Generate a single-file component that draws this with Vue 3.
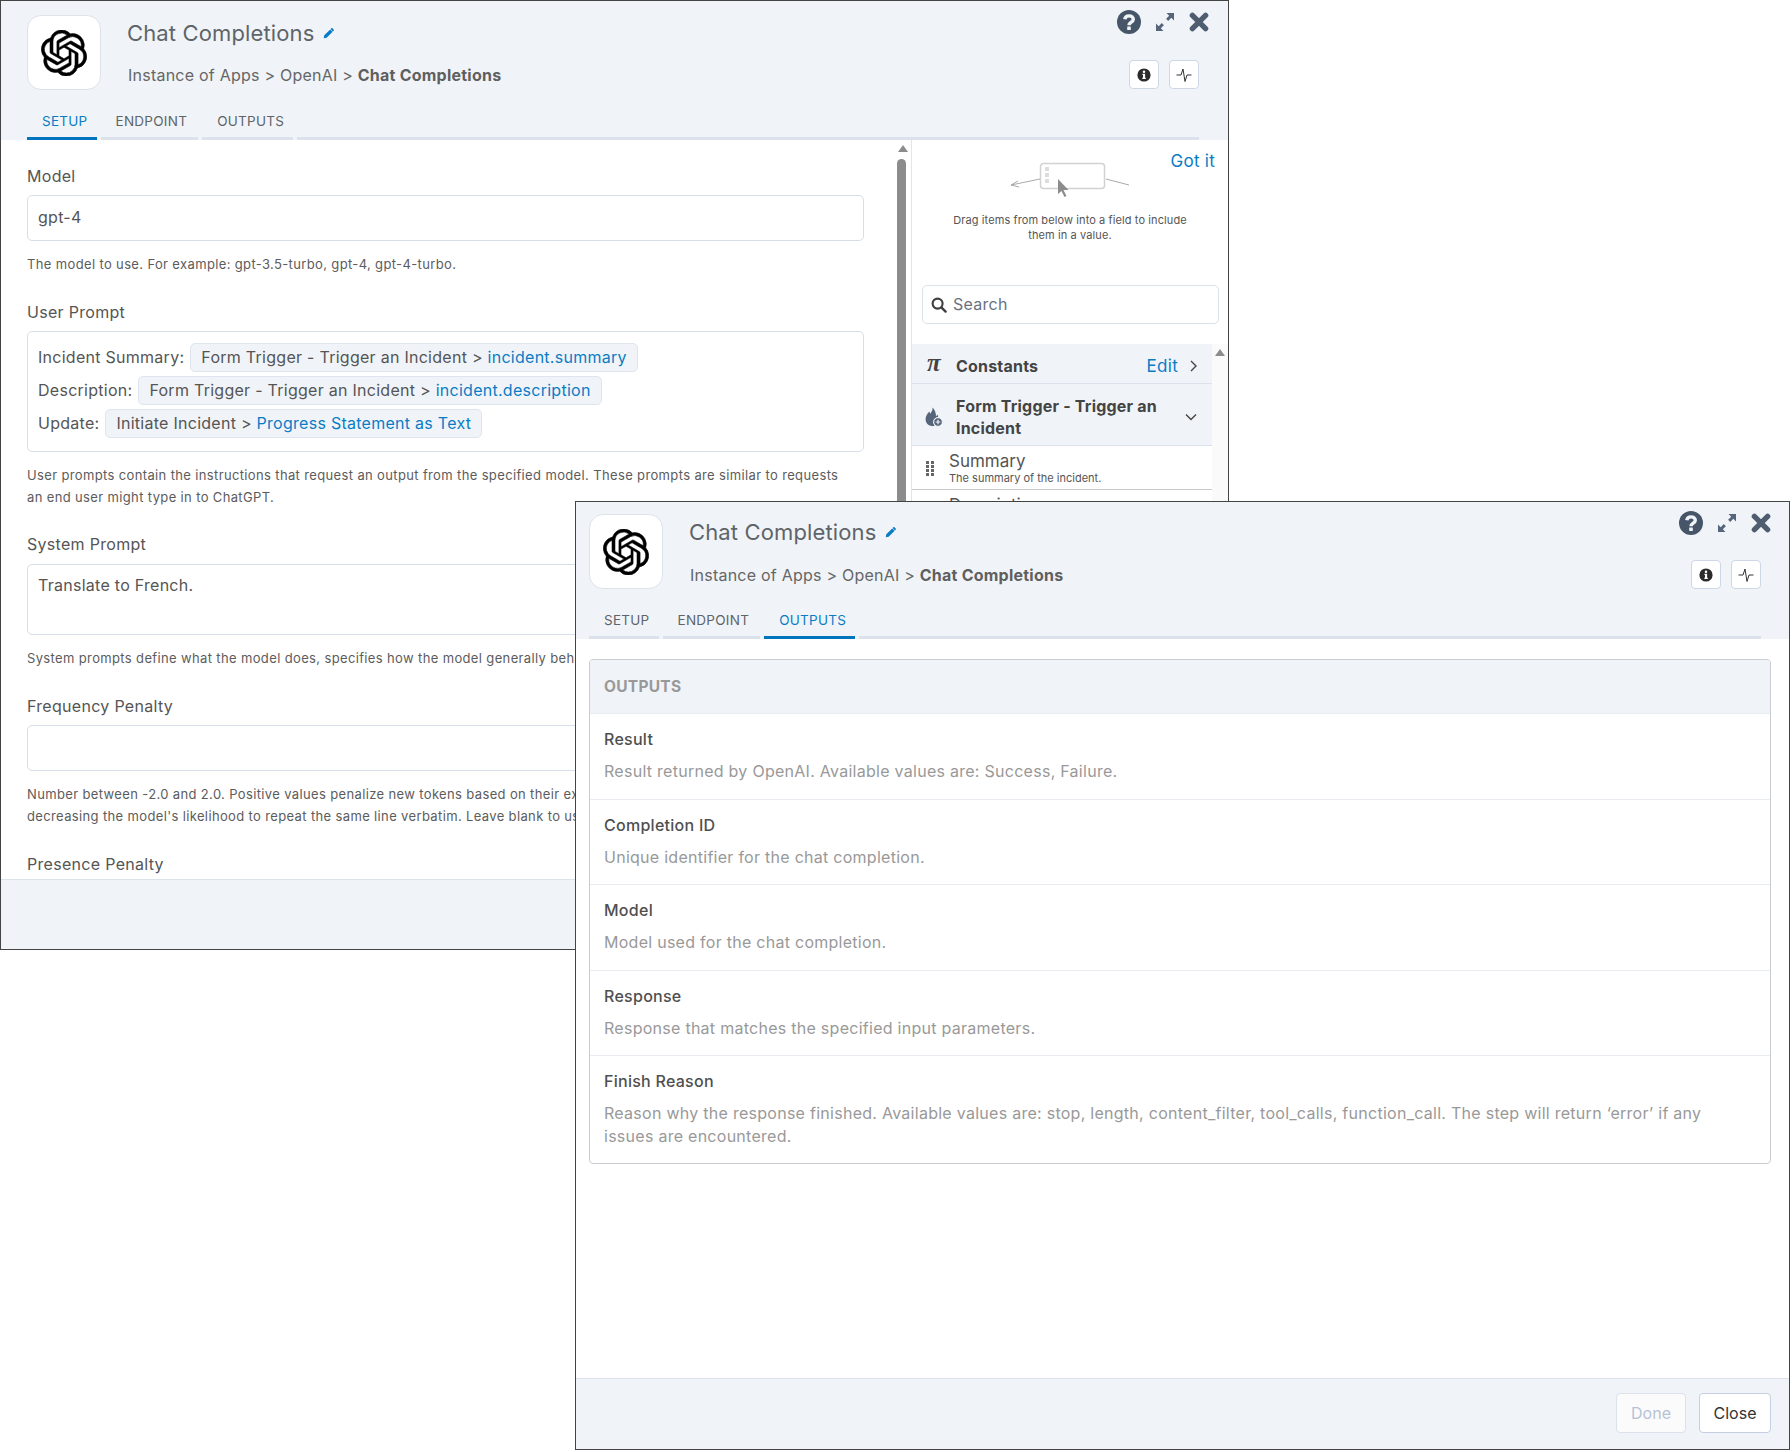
<script setup>
const tabs1 = [
  { name: 'SETUP', active: true },
  { name: 'ENDPOINT' },
  { name: 'OUTPUTS' },
]
const tabs2 = [
  { name: 'SETUP' },
  { name: 'ENDPOINT' },
  { name: 'OUTPUTS', active: true },
]
const outputs = [
  { label: 'Result', text: 'Result returned by OpenAI. Available values are: Success, Failure.' },
  { label: 'Completion ID', text: 'Unique identifier for the chat completion.' },
  { label: 'Model', text: 'Model used for the chat completion.' },
  { label: 'Response', text: 'Response that matches the specified input parameters.' },
  { label: 'Finish Reason', text: 'Reason why the response finished. Available values are: stop, length, content_filter, tool_calls, function_call. The step will return ‘error’ if any issues are encountered.' },
]
const chips = [
  { label: 'Incident Summary:', src: 'Form Trigger - Trigger an Incident >', val: 'incident.summary' },
  { label: 'Description:', src: 'Form Trigger - Trigger an Incident >', val: 'incident.description' },
  { label: 'Update:', src: 'Initiate Incident >', val: 'Progress Statement as Text' },
]
</script>

<template>
  <div class="desk">
    <svg class="defs" width="0" height="0" aria-hidden="true">
      <symbol id="openai" viewBox="0 0 24 24" preserveAspectRatio="none">
        <path fill="#000" stroke="#000" stroke-width=".3" d="M22.2819 9.8211a5.9847 5.9847 0 0 0-.5157-4.9108 6.0462 6.0462 0 0 0-6.5098-2.9A6.0651 6.0651 0 0 0 4.9807 4.1818a5.9847 5.9847 0 0 0-3.9977 2.9 6.0462 6.0462 0 0 0 .7427 7.0966 5.98 5.98 0 0 0 .511 4.9107 6.051 6.051 0 0 0 6.5146 2.9001A5.9847 5.9847 0 0 0 13.2599 24a6.0557 6.0557 0 0 0 5.7718-4.2058 5.9894 5.9894 0 0 0 3.9977-2.9001 6.0557 6.0557 0 0 0-.7475-7.0729zm-9.022 12.6081a4.4755 4.4755 0 0 1-2.8764-1.0408l.1419-.0804 4.7783-2.7582a.7948.7948 0 0 0 .3927-.6813v-6.7369l2.02 1.1686a.071.071 0 0 1 .038.052v5.5826a4.504 4.504 0 0 1-4.4945 4.4944zm-9.6607-4.1254a4.4708 4.4708 0 0 1-.5346-3.0137l.142.0852 4.783 2.7582a.7712.7712 0 0 0 .7806 0l5.8428-3.3685v2.3324a.0804.0804 0 0 1-.0332.0615L9.74 19.9502a4.4992 4.4992 0 0 1-6.1408-1.6464zM2.3408 7.8956a4.485 4.485 0 0 1 2.3655-1.9728V11.6a.7664.7664 0 0 0 .3879.6765l5.8144 3.3543-2.0201 1.1685a.0757.0757 0 0 1-.071 0l-4.8303-2.7865A4.504 4.504 0 0 1 2.3408 7.872zm16.5963 3.8558L13.1038 8.364 15.1192 7.2a.0757.0757 0 0 1 .071 0l4.8303 2.7913a4.4944 4.4944 0 0 1-.6765 8.1042v-5.6772a.79.79 0 0 0-.407-.667zm2.0107-3.0231l-.142-.0852-4.7735-2.7818a.7759.7759 0 0 0-.7854 0L9.409 9.2297V6.8974a.0662.0662 0 0 1 .0284-.0615l4.8303-2.7866a4.4992 4.4992 0 0 1 6.6802 4.66zM8.3065 12.863l-2.02-1.1638a.0804.0804 0 0 1-.038-.0567V6.0742a4.4992 4.4992 0 0 1 7.3757-3.4537l-.142.0805L8.704 5.459a.7948.7948 0 0 0-.3927.6813zm1.0976-2.3654l2.602-1.4998 2.6069 1.4998v2.9994l-2.5974 1.4997-2.6067-1.4997Z"/>
      </symbol>
      <symbol id="pencil" viewBox="0 0 12 12">
        <path fill="#0a7cc4" d="M7.900 1.500 10.500 4.100 4 10.600.8 11.200 1.400 8zM9 .4a1 1 0 0 1 1.400 0l1.200 1.200a1 1 0 0 1 0 1.400l-.7.700-2.600-2.600z"/>
      </symbol>
      <symbol id="help" viewBox="0 0 24 24">
        <circle cx="12" cy="12" r="12" fill="#475569"/>
        <path fill="none" stroke="#f0f4f8" stroke-width="3.400" d="M7.800 9.300c.3-2.300 2-3.400 4.300-3.400 2.400 0 4.200 1.300 4.200 3.300 0 3-4.300 2.800-4.300 6"/>
        <rect x="10.200" y="16.600" width="3.600" height="3.400" rx=".5" fill="#f0f4f8"/>
      </symbol>
      <symbol id="expand" viewBox="0 0 20 20">
        <path fill="#56657a" d="M11.500 1H19v7.500l-2.700-2.700-3.100 3.100-2.100-2.100 3.100-3.100zM8.500 19H1v-7.500l2.700 2.700 3.100-3.100 2.100 2.100-3.100 3.100z"/>
      </symbol>
      <symbol id="close" viewBox="0 0 20 20">
        <path fill="none" stroke="#4f5d70" stroke-width="5.400" stroke-linecap="round" d="M3.400 3.400 16.600 16.600M16.600 3.400 3.400 16.600"/>
      </symbol>
      <symbol id="info" viewBox="0 0 14 14">
        <circle cx="7" cy="7" r="6.600" fill="#2b2b2b"/>
        <circle cx="7" cy="3.700" r="1.250" fill="#fff"/>
        <path fill="#fff" d="M5.400 5.800h2.700v4h.7v1.200H5.300V9.800H6V7H5.400z"/>
      </symbol>
      <symbol id="pulse" viewBox="0 0 16 16">
        <path fill="none" stroke="#333" stroke-width="1" d="M.5 8H5L7 2 9 14.500 11 8h4.500"/>
      </symbol>
      <symbol id="search" viewBox="0 0 16 16">
        <circle cx="6.600" cy="6.600" r="5" fill="none" stroke="#3f3f3f" stroke-width="2.100"/>
        <path stroke="#3f3f3f" stroke-width="2.400" stroke-linecap="round" d="m10.600 10.600 4 4"/>
      </symbol>
    </svg>

    <!-- Back window: Setup tab -->
    <section class="window back">
      <header class="head">
        <div class="head-top">
          <div class="logo"><svg class="logo-mark"><use href="#openai" /></svg></div>
          <div class="titles">
            <div class="title">Chat Completions <svg class="pencil"><use href="#pencil" /></svg></div>
            <div class="crumbs">Instance of Apps &gt; OpenAI &gt; <b>Chat Completions</b></div>
          </div>
          <div class="actions">
            <div class="tools">
              <svg class="i-help"><use href="#help" /></svg>
              <svg class="i-expand"><use href="#expand" /></svg>
              <svg class="i-close"><use href="#close" /></svg>
            </div>
            <div class="mini-btns">
              <button class="mini"><svg class="i-info"><use href="#info" /></svg></button>
              <button class="mini"><svg class="i-pulse"><use href="#pulse" /></svg></button>
            </div>
          </div>
        </div>
        <nav class="tabs">
          <span v-for="t in tabs1" :key="t.name" class="tab" :class="{ on: t.active }">{{ t.name }}</span>
          <span class="tab-rest"></span>
        </nav>
      </header>

      <div class="body">
        <div class="form">
          <div class="field">
            <div class="label">Model</div>
            <div class="control">gpt-4</div>
            <p class="help">The model to use. For example: gpt-3.5-turbo, gpt-4, gpt-4-turbo.</p>
          </div>
          <div class="field user-prompt">
            <div class="label">User Prompt</div>
            <div class="control prompt">
              <div v-for="c in chips" :key="c.label" class="prompt-line">
                <span>{{ c.label }}</span>
                <span class="chip">{{ c.src }} <a>{{ c.val }}</a></span>
              </div>
            </div>
            <p class="help">User prompts contain the instructions that request an output from the specified model. These prompts are similar to requests<br />an end user might type in to ChatGPT.</p>
          </div>
          <div class="field">
            <div class="label">System Prompt</div>
            <div class="control area">Translate to French.</div>
            <p class="help">System prompts define what the model does, specifies how the model generally behaves.</p>
          </div>
          <div class="field">
            <div class="label">Frequency Penalty</div>
            <div class="control"></div>
            <p class="help">Number between -2.0 and 2.0. Positive values penalize new tokens based on their existing frequency in the text so far,<br />decreasing the model's likelihood to repeat the same line verbatim. Leave blank to use the default.</p>
          </div>
          <div class="field">
            <div class="label">Presence Penalty</div>
          </div>
        </div>

        <div class="scroll">
          <span class="arrow"></span>
          <span class="thumb"></span>
        </div>

        <aside class="panel">
          <div class="intro">
            <a class="got">Got it</a>
            <svg class="drag-art" viewBox="0 0 120 40" width="120" height="40">
              <rect x="30.500" y="4.500" width="64" height="25" rx="3" fill="#fff" stroke="#d2d2d2" stroke-width="1.500" />
              <rect x="35" y="8" width="4" height="4" fill="#ddd" />
              <rect x="35" y="14" width="4" height="4" fill="#ddd" />
              <rect x="35" y="20" width="4" height="4" fill="#ddd" />
              <path d="M30 20 1 26M8 22l-7 4 8 2" fill="none" stroke="#aaa" />
              <path d="M96 20l23 6" fill="none" stroke="#aaa" />
              <path d="M48 20v15l3.500-3 3 6 2-1-3-6h5z" fill="#8c8c8c" />
            </svg>
          </div>
          <p class="drag-text">Drag items from below into a field to include<br />them in a value.</p>
          <div class="search">
            <svg class="i-search"><use href="#search" /></svg>
            <span class="search-text">Search</span>
          </div>
          <div class="lists">
            <div class="list">
              <div class="group constants">
                <span class="pi">π</span>
                <b>Constants</b>
                <a class="edit">Edit</a>
                <svg class="chev" viewBox="0 0 10 12" width="10" height="12"><path d="M2 1l5 5-5 5" fill="none" stroke="#444" stroke-width="1.400" /></svg>
              </div>
              <div class="group trigger">
                <svg class="flame" viewBox="0 0 18 20" width="18" height="20">
                  <path fill="#56657a" d="M7.500.5c.6 2.800-1.300 4.200-2 6.300-.7-.6-1-1.500-1-2.400C2.300 6.400.6 9 .6 12.200c0 4 3.200 6.800 6.900 6.800.8 0 1.500-.1 2.200-.3-.9-.9-1.400-2.200-1.400-3.600 0-2.700 2.100-4.900 4.800-5 .1-1-.3-1.900-.8-2.700-.3.800-.7 1.400-1.300 1.900C11 6.100 9.800 2.500 7.500.5z"/>
                  <circle cx="13" cy="15" r="4.300" fill="#56657a" stroke="#f0f4f8" />
                  <path stroke="#f0f4f8" stroke-width="1.200" d="M13 12.700v4.600M10.700 15h4.600" />
                </svg>
                <b>Form Trigger - Trigger an Incident</b>
                <svg class="chev-d" viewBox="0 0 12 8" width="12" height="8"><path d="M1 1.500l5 5 5-5" fill="none" stroke="#444" stroke-width="1.400" /></svg>
              </div>
              <div class="item">
                <span class="grip"><i v-for="n in 8" :key="n"></i></span>
                <div>
                  <div class="item-name">Summary</div>
                  <div class="item-desc">The summary of the incident.</div>
                </div>
              </div>
              <div class="item">
                <span class="grip"><i v-for="n in 8" :key="n"></i></span>
                <div><div class="item-name">Description</div></div>
              </div>
            </div>
            <div class="list-scroll"><span class="arrow"></span></div>
          </div>
        </aside>
      </div>
      <footer class="foot"></footer>
    </section>

    <!-- Front window: Outputs tab -->
    <section class="window front">
      <header class="head">
        <div class="head-top">
          <div class="logo"><svg class="logo-mark"><use href="#openai" /></svg></div>
          <div class="titles">
            <div class="title">Chat Completions <svg class="pencil"><use href="#pencil" /></svg></div>
            <div class="crumbs">Instance of Apps &gt; OpenAI &gt; <b>Chat Completions</b></div>
          </div>
          <div class="actions">
            <div class="tools">
              <svg class="i-help"><use href="#help" /></svg>
              <svg class="i-expand"><use href="#expand" /></svg>
              <svg class="i-close"><use href="#close" /></svg>
            </div>
            <div class="mini-btns">
              <button class="mini"><svg class="i-info"><use href="#info" /></svg></button>
              <button class="mini"><svg class="i-pulse"><use href="#pulse" /></svg></button>
            </div>
          </div>
        </div>
        <nav class="tabs">
          <span v-for="t in tabs2" :key="t.name" class="tab" :class="{ on: t.active }">{{ t.name }}</span>
          <span class="tab-rest"></span>
        </nav>
      </header>

      <div class="out-body">
        <div class="out-card">
          <div class="out-head">OUTPUTS</div>
          <div v-for="o in outputs" :key="o.label" class="out-row">
            <div class="out-label">{{ o.label }}</div>
            <div class="out-text">{{ o.text }}</div>
          </div>
        </div>
      </div>

      <footer class="foot front-foot">
        <button class="btn done">Done</button>
        <button class="btn">Close</button>
      </footer>
    </section>
  </div>
</template>

<style>
html, body { margin: 0; background: #fff; }
</style>

<style scoped>
.desk {
  position: relative;
  width: 1792px;
  height: 1452px;
  background: #fff;
  font-family: Inter, "Liberation Sans", sans-serif;
  color: #555;
  overflow: hidden;
}
.defs { position: absolute; }
.window {
  position: absolute;
  box-sizing: border-box;
  display: flex;
  flex-direction: column;
  border: 1px solid #444;
  background: #fff;
  overflow: hidden;
  letter-spacing: 0.27px;
}
.back { left: 0; top: 0; width: 1229px; height: 950px; }
.front { left: 575px; top: 501px; width: 1215px; height: 949px; z-index: 2; }

.head { background: #f0f4f8; flex: none; }
.head-top { display: flex; padding: 14px 29px 0 26px; }
.front .head-top { padding: 12px 28px 0 13px; }
.logo {
  box-sizing: border-box;
  width: 74px;
  height: 75px;
  flex: none;
  display: flex;
  align-items: center;
  justify-content: center;
  background: #fff;
  border: 1px solid #dde3ea;
  border-radius: 14px;
}
.logo-mark { width: 46px; height: 46px; }
.titles { margin-left: 26px; flex: 1; }
.title {
  font-size: 22px;
  letter-spacing: 0.13px;
  line-height: 36px;
  color: #5f6468;
  display: flex;
  align-items: center;
  gap: 9px;
}
.pencil { width: 11px; height: 11px; }
.crumbs { margin: 13px 0 0 1px; font-size: 16px; letter-spacing: 0.23px; line-height: 22px; color: #666; }
.front .crumbs { margin-top: 14px; }
.crumbs b { font-weight: 700; color: #5f5f5f; }
.actions { display: flex; flex-direction: column; align-items: flex-end; width: 90px; flex: none; }
.tools { display: flex; align-items: center; gap: 14px; margin: -5px -10px 0 0; height: 24px; flex: none; }
.front .tools { margin-top: -3px; }
.i-help { width: 24px; height: 24px; }
.i-expand { width: 20px; height: 20px; }
.i-close { width: 20px; height: 20px; }
.mini-btns { display: flex; gap: 10px; margin-top: 26px; }
.front .mini-btns { margin-top: 25px; }
.mini {
  box-sizing: border-box;
  width: 30px;
  height: 29px;
  padding: 0;
  display: flex;
  align-items: center;
  justify-content: center;
  background: #fff;
  border: 1px solid #cdd7e6;
  border-radius: 4px;
}
.i-info { width: 14px; height: 14px; }
.i-pulse { width: 16px; height: 16px; }

.tabs { display: flex; gap: 4px; margin-top: 7px; padding: 0 29px 0 26px; }
.front .tabs { padding: 0 28px 0 13px; }
.tab {
  box-sizing: border-box;
  height: 43px;
  padding: 16px 9px 0 15px;
  font-size: 13.500px;
  line-height: 16px;
  color: #5f6468;
  border-bottom: 3px solid #dbe2ec;
}
.tab:nth-child(2) { padding-right: 11px; }
.tab.on { color: #0a7cc4; border-bottom-color: #0075be; }
.tab-rest { flex: 1; border-bottom: 3px solid #dbe2ec; }

.body { flex: 1; min-height: 0; display: flex; overflow: hidden; }
.form { box-sizing: border-box; width: 896px; flex: none; padding: 25px 0 0 26px; overflow: hidden; }
.field { width: 837px; margin-bottom: 26px; }
.user-prompt { margin-bottom: 25px; }
.label { font-size: 16px; letter-spacing: 0.3px; line-height: 22px; color: #555; margin-bottom: 8px; }
.control {
  box-sizing: border-box;
  height: 46px;
  padding: 0 10px;
  border: 1px solid #d7deea;
  border-radius: 5px;
  font-size: 16px;
  line-height: 42px;
  color: #555;
}
.prompt { height: 121px; padding: 11px 10px 0; line-height: 27px; }
.prompt-line { display: flex; align-items: center; gap: 6px; height: 29px; margin-bottom: 4px; white-space: nowrap; }
.chip {
  box-sizing: border-box;
  height: 29px;
  padding: 0 10px;
  background: #f0f4f8;
  border: 1px solid #dfe5ee;
  border-radius: 5px;
}
.chip a, .edit, .got { color: #0a7cc4; }
.area { height: 71px; margin-top: 9px; line-height: 40px; }
.help { margin: 12px 0 0; font-size: 13px; letter-spacing: 0.36px; line-height: 22px; color: #5c5c5c; white-space: nowrap; }

.scroll { position: relative; width: 14px; flex: none; }
.arrow {
  position: absolute;
  top: 5px;
  left: 1px;
  width: 0;
  height: 0;
  border-left: 5px solid transparent;
  border-right: 5px solid transparent;
  border-bottom: 7px solid #8c8c8c;
}
.thumb {
  position: absolute;
  top: 19px;
  left: 0;
  width: 9px;
  height: 500px;
  border-radius: 5px;
  background: #8c8c8c;
}
.panel {
  flex: 1;
  min-width: 0;
  border-left: 1px solid #dfe5ee;
  display: flex;
  flex-direction: column;
  overflow: hidden;
}
.intro { display: grid; height: 60px; }
.got, .drag-art { grid-area: 1 / 1; }
.got {
  justify-self: end;
  margin: 11px 13px 0 0;
  font-size: 17px;
  line-height: 20px;
}
.drag-art { justify-self: center; margin-top: 19px; }
.drag-text { margin: 13px 0 0; text-align: center; font-size: 11px; line-height: 15px; color: #555; letter-spacing: 0.1px; }
.search {
  box-sizing: border-box;
  display: flex;
  align-items: center;
  gap: 6px;
  height: 39px;
  margin: 42px 9px 0 10px;
  padding: 0 8px;
  border: 1px solid #dbe2ec;
  border-radius: 5px;
  font-size: 16px;
  color: #6a7280;
}
.search-text { margin-top: -2px; }
.i-search { width: 16px; height: 16px; }
.lists { display: flex; margin-top: 20px; flex: 1; }
.list { width: 300px; flex: none; }
.list-scroll { position: relative; flex: 1; background: #fafafa; }
.list-scroll .arrow { left: 3px; }
.group {
  box-sizing: border-box;
  display: flex;
  align-items: center;
  background: #f0f4f8;
  border-bottom: 1px solid #dbe2ec;
  color: #444;
}
.group b { font-weight: 700; letter-spacing: 0.2px; font-size: 16px; }
.constants { height: 40px; padding: 4px 13px 0 15px; }
.pi { width: 29px; font: italic 700 25px/1 "Liberation Serif", serif; color: #444; margin-top: -6px; }
.edit { margin-left: auto; margin-right: 11px; font-size: 17px; }
.trigger { height: 62px; padding: 5px 15px 0 13px; line-height: 22px; }
.flame { margin-right: 13px; flex: none; }
.trigger b { flex: 1; }
.chev-d { flex: none; margin-left: 10px; }
.item {
  box-sizing: border-box;
  display: flex;
  align-items: flex-start;
  gap: 15px;
  height: 44px;
  padding: 6px 0 0 14px;
  border-bottom: 1px solid #c9c9c9;
}
.grip { display: grid; grid-template-columns: 3px 3px; gap: 1px 2px; width: 8px; margin-top: 9px; }
.grip i { width: 3px; height: 3px; background: #666; }
.item-name { font-size: 17px; letter-spacing: 0; line-height: 19px; color: #555; }
.item-desc { font-size: 11px; line-height: 13px; margin-top: 1px; color: #555; letter-spacing: 0; white-space: nowrap; }

.out-body { flex: 1; min-height: 0; padding: 20px 18px 0 13px; }
.out-card {
  border: 1px solid #c9cdd2;
  border-radius: 4px;
  overflow: hidden;
}
.out-head {
  box-sizing: border-box;
  height: 53px;
  padding: 0 14px;
  display: flex;
  align-items: center;
  background: #f0f4f8;
  font-size: 15.500px;
  font-weight: 700;
  color: #999;
}
.out-row { padding: 14px 50px 15.500px 14px; border-top: 1px solid #e8ebef; }
.out-row:last-child { padding-bottom: 15px; }
.out-label { font-size: 16px; font-weight: 500; line-height: 22px; color: #4f4f4f; margin-bottom: 10px; }
.out-text { font-size: 16px; line-height: 23px; color: #999; }

.foot { box-sizing: border-box; height: 70px; flex: none; background: #f0f4f8; border-top: 1px solid #dbe2ec; }
.front-foot {
  height: 71px;
  display: flex;
  justify-content: flex-end;
  align-items: flex-start;
  gap: 13px;
  padding: 14px 18px 0 0;
}
.btn {
  box-sizing: border-box;
  height: 40px;
  width: 72px;
  background: #fff;
  border: 1px solid #c5cfdf;
  border-radius: 4px;
  font: 16px Inter, sans-serif;
  color: #333;
}
.btn.done { width: 70px; background: #fbfbfc; border-color: #dbe2ec; color: #b5c2d6; }
</style>
